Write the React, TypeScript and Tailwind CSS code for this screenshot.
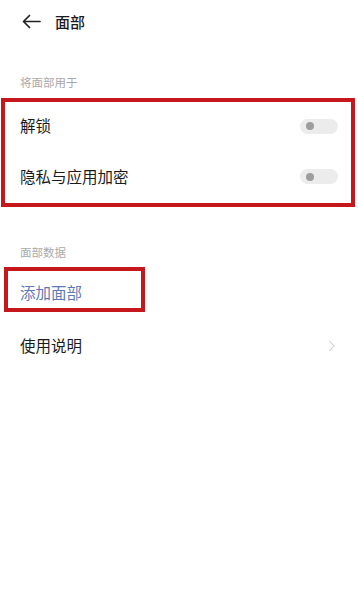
import { ChevronRight } from "lucide-react";

function Toggle() {
  return (
    <span className="relative block h-[15px] w-[38px] rounded-full bg-[#ececec]">
      <span className="absolute left-[6px] top-[3.5px] h-[8px] w-[8px] rounded-full bg-[#9d9d9d]" />
    </span>
  );
}

export default function App() {
  return (
    <div
      className="h-[600px] w-[358px] bg-white text-[#1b1b1b]"
      style={{ fontFamily: '"Noto Sans CJK SC", "Noto Sans", sans-serif' }}
    >
      {/* 顶部栏 */}
      <div className="flex h-[42px] items-center">
        <svg
          className="ml-[22px]"
          width="19"
          height="15"
          viewBox="0 0 19 15"
          fill="none"
          stroke="#222"
          strokeWidth="1.7"
          strokeLinecap="round"
          strokeLinejoin="round"
        >
          <path d="M18 7.5H1.5M7.5 1.5 1.5 7.5l6 6" />
        </svg>
        <span className="ml-[14px] text-[15px] font-medium leading-none">面部</span>
      </div>

      <div className="mt-[33px] pl-[20px] text-[11.5px] leading-[14px] text-[#a9a9a9]">将面部用于</div>

      <div className="ml-[1px] mt-[9px] w-[354px] border-4 border-[#c5171c]">
        <div className="flex h-[48px] items-center justify-between pl-[15px] pr-[13px]">
          <span className="text-[15.5px]">解锁</span>
          <Toggle />
        </div>
        <div className="flex h-[53px] items-center justify-between pl-[15px] pr-[13px]">
          <span className="text-[15.5px]">隐私与应用加密</span>
          <Toggle />
        </div>
      </div>

      <div className="mt-[38px] pl-[20px] text-[11.5px] leading-[14px] text-[#a9a9a9]">面部数据</div>

      <div className="ml-[4px] mt-[8px] flex h-[45px] w-[141px] items-center border-4 border-[#c5171c] pl-[12px] pt-[6px]">
        <span className="text-[15.5px] text-[#5d7ab5]">添加面部</span>
      </div>

      <div className="mt-[10px] flex h-[48px] items-center justify-between pl-[20px] pr-[17px]">
        <span className="text-[15.5px]">使用说明</span>
        <ChevronRight size={18} strokeWidth={1.4} className="text-[#c8c8c8]" />
      </div>
    </div>
  );
}
